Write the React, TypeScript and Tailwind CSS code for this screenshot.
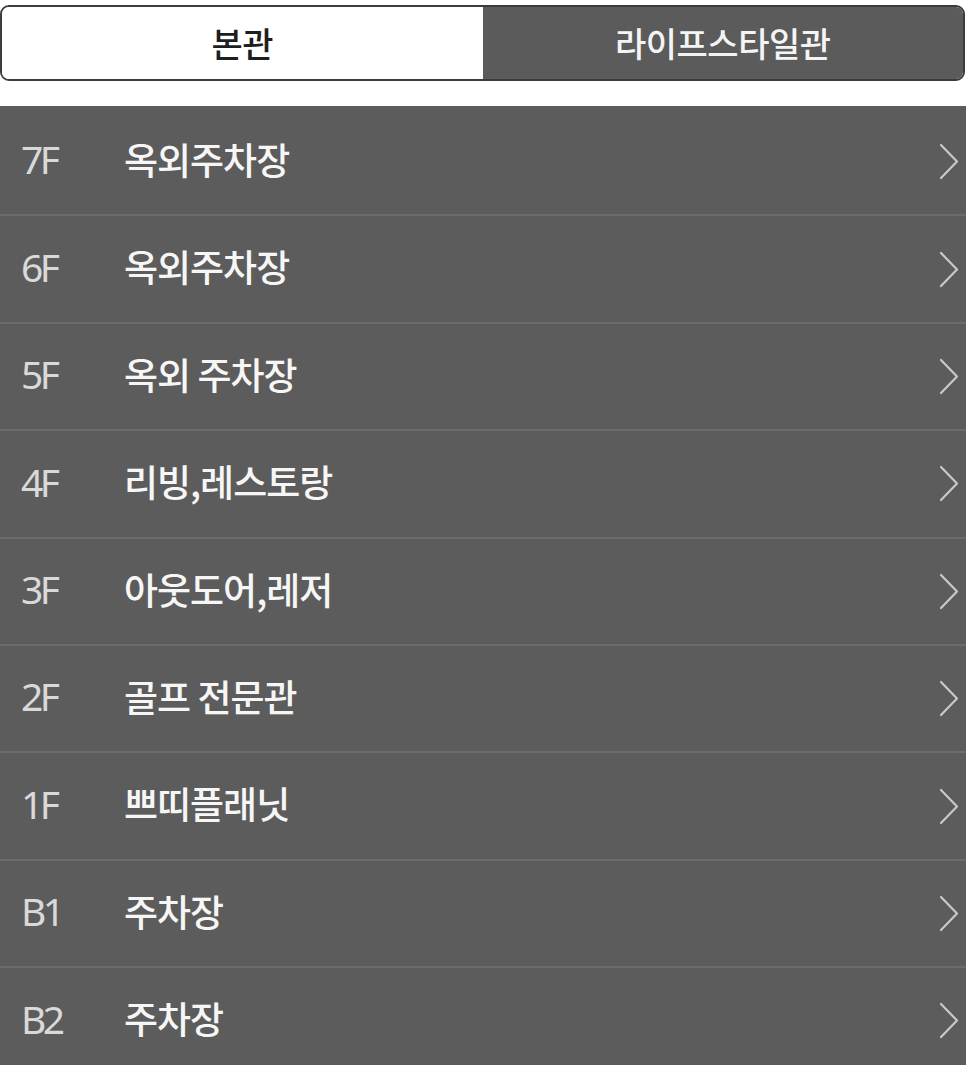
import { useState } from "react";

const floors = [
  { floor: "7F", name: "옥외주차장" },
  { floor: "6F", name: "옥외주차장" },
  { floor: "5F", name: "옥외 주차장" },
  { floor: "4F", name: "리빙,레스토랑" },
  { floor: "3F", name: "아웃도어,레저" },
  { floor: "2F", name: "골프 전문관" },
  { floor: "1F", name: "쁘띠플래닛" },
  { floor: "B1", name: "주차장" },
  { floor: "B2", name: "주차장" },
];

const krFont = "[font-family:'Noto_Sans_CJK_KR','Noto_Sans',sans-serif]";

function Chevron() {
  return (
    <svg width="20" height="37" viewBox="0 0 20 37" fill="none" className="shrink-0">
      <path d="M2 2 L18 18.5 L2 35" stroke="#c9c9c9" strokeWidth="2.2" strokeLinecap="round" strokeLinejoin="round" />
    </svg>
  );
}

export default function App() {
  const [tab, setTab] = useState(1);

  return (
    <div className="w-[966px] h-[1065px] overflow-hidden bg-white">
      <div className="pt-[5px] pr-px">
        <div className="flex h-[76px] overflow-hidden rounded-[9px] border-2 border-[#3c3c3c]">
          {["본관", "라이프스타일관"].map((label, i) => (
            <button
              key={label}
              type="button"
              onClick={() => setTab(i)}
              className={`flex flex-1 items-center justify-center pb-[2px] text-[34px] font-medium tracking-[-0.5px] ${krFont} ${
                tab === i ? "bg-[#5b5b5b] text-[#f4f4f4]" : "bg-white text-[#1e1e1e]"
              }`}
            >
              {label}
            </button>
          ))}
        </div>
      </div>

      <ul className="mt-[25px] bg-[#5c5c5c] pt-[3px]">
        {floors.map((f) => (
          <li
            key={f.floor}
            className="flex h-[107.4px] items-center border-b-2 border-[#6c6c6c] pl-[21px] pr-[7px]"
          >
            <span className="w-[103px] pb-[4px] text-[39px] font-normal tracking-[-3.5px] text-[#d9d9d9] [font-family:'Noto_Sans',sans-serif]">
              {f.floor}
            </span>
            <span className={`flex-1 pb-[4px] text-[37px] font-medium tracking-[-1px] text-[#f6f6f6] ${krFont}`}>
              {f.name}
            </span>
            <Chevron />
          </li>
        ))}
      </ul>
    </div>
  );
}
